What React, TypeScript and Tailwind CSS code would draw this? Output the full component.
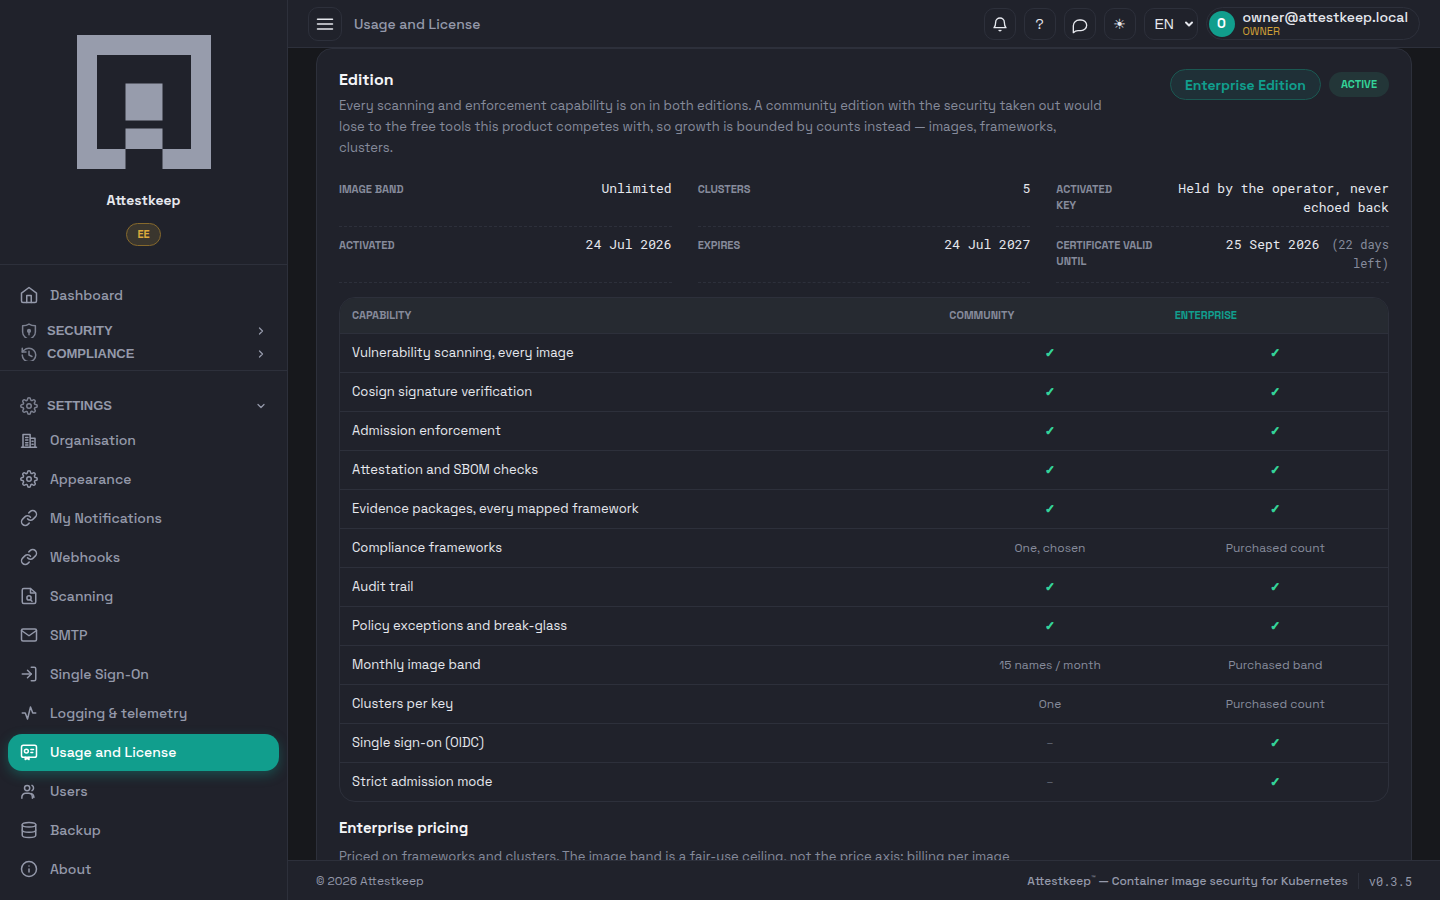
import type { ReactNode } from 'react';
import { clsx } from 'clsx';
import { ChevronDown, ChevronRight, History, Info, LogIn } from 'lucide-react';
import { FiLink, FiMail, FiSettings } from 'react-icons/fi';

interface IconProps {
  className?: string;
  children: ReactNode;
}

/**
 * Base for the icons drawn in this file
 */
function Icon({ className = 'w-[18px] h-[18px]', children }: IconProps) {
  return (
    <svg
      className={clsx('shrink-0', className)}
      viewBox="0 0 24 24"
      fill="none"
      stroke="currentColor"
      strokeWidth={2}
      strokeLinecap="round"
      strokeLinejoin="round"
      aria-hidden="true"
    >
      {children}
    </svg>
  );
}

const iconClass = 'w-[18px] h-[18px] shrink-0';

const homeIcon = (
  <Icon>
    <path d="M2 9.500 12 2l10 7.500V20a2 2 0 0 1-2 2H4a2 2 0 0 1-2-2z" />
    <path d="M9 22V12.500h6V22" />
  </Icon>
);

const shieldIcon = (
  <Icon>
    <path d="M12 1.500c2.500 1.600 5 2.200 8.500 2.200V12c0 5-3.500 8-8.500 10-5-2-8.500-5-8.500-10V3.700C7 3.700 9.500 3.100 12 1.500z" />
    <circle cx="12" cy="10.500" r="1.800" fill="currentColor" />
    <path d="M12 12v3.500" />
  </Icon>
);

const buildingIcon = (
  <Icon>
    <path d="M2 21.500h20M4 21.500V4.500h9.500v17M13.500 9.500h6.500v12" />
    <path d="M7.500 8.500h3M7.500 12h3M7.500 15.500h3M7.500 18.500h3M16 13.500h1.500M16 17.500h1.500" />
  </Icon>
);

const fileSearchIcon = (
  <Icon>
    <path d="M14 2H5a2 2 0 0 0-2 2v16a2 2 0 0 0 2 2h14a2 2 0 0 0 2-2V8z" />
    <path d="M14 2v6h6" />
    <circle cx="12" cy="14.500" r="2.800" />
    <path d="m14 17 2 2" />
  </Icon>
);

const licenseIcon = (
  <Icon>
    <rect x="2" y="3" width="20" height="16" rx="2.500" />
    <circle cx="8.500" cy="10.800" r="2.600" />
    <path d="M14.500 8.500h3.500M14.500 12.500h2.500M7 19v3l2.500-1.500L12 22v-3" />
  </Icon>
);

const usersIcon = (
  <Icon>
    <circle cx="9.500" cy="8" r="3.500" />
    <path d="M2.500 21.500V20a5 5 0 0 1 5-5h4a5 5 0 0 1 5 5v1.500" />
    <path d="M16 4.500a4 4 0 0 1 0 7M15.500 15.500c2 .8 3 2.500 3 5" />
  </Icon>
);

const pulseIcon = (
  <Icon>
    <path d="M3 12h4l3 8 4-16 3 8h4" />
  </Icon>
);

const databaseIcon = (
  <Icon>
    <ellipse cx="12" cy="5" rx="9" ry="3" />
    <path d="M3 5v14c0 1.700 4 3 9 3s9-1.300 9-3V5" />
    <path d="M3 12c0 1.700 4 3 9 3s9-1.300 9-3" />
  </Icon>
);

interface NavEntry {
  label: string;
  icon: ReactNode;
  active?: boolean;
}

const SETTINGS_ITEMS: NavEntry[] = [
  { label: 'Organisation', icon: buildingIcon },
  { label: 'Appearance', icon: <FiSettings className={iconClass} /> },
  { label: 'My Notifications', icon: <FiLink className={iconClass} /> },
  { label: 'Webhooks', icon: <FiLink className={iconClass} /> },
  { label: 'Scanning', icon: fileSearchIcon },
  { label: 'SMTP', icon: <FiMail className={iconClass} /> },
  { label: 'Single Sign-On', icon: <LogIn className={iconClass} /> },
  { label: 'Logging & telemetry', icon: pulseIcon },
  { label: 'Usage and License', icon: licenseIcon, active: true },
  { label: 'Users', icon: usersIcon },
  { label: 'Backup', icon: databaseIcon },
  { label: 'About', icon: <Info className={iconClass} /> },
];

const CAPABILITIES = [
  { name: 'Vulnerability scanning, every image', community: '✓', enterprise: '✓' },
  { name: 'Cosign signature verification', community: '✓', enterprise: '✓' },
  { name: 'Admission enforcement', community: '✓', enterprise: '✓' },
  { name: 'Attestation and SBOM checks', community: '✓', enterprise: '✓' },
  { name: 'Evidence packages, every mapped framework', community: '✓', enterprise: '✓' },
  { name: 'Compliance frameworks', community: 'One, chosen', enterprise: 'Purchased count' },
  { name: 'Audit trail', community: '✓', enterprise: '✓' },
  { name: 'Policy exceptions and break-glass', community: '✓', enterprise: '✓' },
  { name: 'Monthly image band', community: '15 names / month', enterprise: 'Purchased band' },
  { name: 'Clusters per key', community: 'One', enterprise: 'Purchased count' },
  { name: 'Single sign-on (OIDC)', community: '–', enterprise: '✓' },
  { name: 'Strict admission mode', community: '–', enterprise: '✓' },
];

/**
 * Sidebar link
 */
function NavItem({ label, icon, active }: NavEntry) {
  return (
    <a
      href="#"
      aria-current={active ? 'page' : undefined}
      className={clsx(
        'flex h-[37px] items-center gap-3 rounded-[14px] px-3 pb-0.5 text-sm font-medium',
        active ? 'bg-[#119e8d] text-white shadow-[0_4px_12px_rgba(17,158,141,0.35)]' : 'text-[#9499aa]'
      )}
    >
      {icon}
      {label}
    </a>
  );
}

interface NavGroupProps {
  label: string;
  icon: ReactNode;
  open?: boolean;
}

/**
 * Collapsible sidebar heading
 */
function NavGroup({ label, icon, open = false }: NavGroupProps) {
  const Chevron = open ? ChevronDown : ChevronRight;
  return (
    <button
      type="button"
      aria-expanded={open}
      className="flex h-[23px] w-full items-center gap-[9px] px-5 text-left font-['Liberation_Sans',sans-serif] text-[13px] font-bold uppercase text-[#9499aa]"
    >
      <span className={clsx('shrink-0 opacity-80', !open && 'h-[15px] overflow-hidden')}>{icon}</span>
      <span className="flex-1">{label}</span>
      <Chevron className="h-3 w-3" strokeWidth={2.5} />
    </button>
  );
}

function Sidebar() {
  return (
    <aside className="flex w-72 shrink-0 flex-col overflow-hidden border-r border-[#2d303b] bg-[#20222b]">
      {/* Brand */}
      <div className="flex flex-col items-center border-b border-[#2d303b] pt-[35px] pb-[18px]">
        <svg className="h-[134px] w-[134px] text-[#979cac]" viewBox="0 0 134 134" fill="currentColor" aria-hidden="true">
          <path d="M0 0h134v134H85.500v-20H114V20H20v94h28.500v20H0z" />
          <path d="M48.500 48.500h37v37h-37zM48.500 93.500h37V114h-37z" />
        </svg>
        <div className="mt-[21px] text-sm leading-5 font-bold text-[#e6e8ee]">Attestkeep</div>
        <span className="mt-[13px] flex h-[23px] items-center rounded-full border border-[#86692c] bg-[#3a362e] px-2.5 text-[11px] font-bold text-[#dcaa3c]">
          EE
        </span>
      </div>

      <nav>
        <div className="border-b border-[#2d303b] pt-3 pb-[5px]">
          <div className="mb-[5px] px-2">
            <NavItem label="Dashboard" icon={homeIcon} />
          </div>
          <NavGroup label="Security" icon={shieldIcon} />
          <NavGroup label="Compliance" icon={<History className={iconClass} />} />
        </div>

        <div className="pt-[23px]">
          <NavGroup label="Settings" icon={<FiSettings className={iconClass} />} open />
          <div className="mt-[5px] flex flex-col gap-[2px] px-2">
            {SETTINGS_ITEMS.map((item) => (
              <NavItem key={item.label} {...item} />
            ))}
          </div>
        </div>
      </nav>
    </aside>
  );
}

function HeaderButton({ label, children }: { label: string; children: ReactNode }) {
  return (
    <button
      type="button"
      aria-label={label}
      className="flex h-8 w-8 items-center justify-center rounded-[10px] border border-[#2d303b] text-sm text-[#e6e8ee]"
    >
      {children}
    </button>
  );
}

function Header() {
  return (
    <header className="flex h-12 shrink-0 items-center justify-between border-b border-[#2d303b] bg-[#20222b] px-5">
      <div className="flex items-center gap-3">
        <button
          type="button"
          aria-label="Toggle menu"
          className="flex h-[34px] w-[34px] items-center justify-center rounded-[10px] border border-[#2d303b] text-[#e6e8ee]"
        >
          <Icon className="h-[18px] w-[18px]">
            <path d="M2 5.500h20M2 12h20M2 18.500h20" />
          </Icon>
        </button>
        <span className="text-sm font-medium text-[#9499aa]">Usage and License</span>
      </div>

      <div className="flex items-center gap-2">
        <HeaderButton label="Notifications">
          <Icon className="h-4 w-4">
            <path d="M3 17.500h18c-2-2-2.500-4-2.500-8a6.500 6.500 0 0 0-13 0c0 4-.5 6-2.500 8z" />
            <path d="M10.500 21.500c1 .8 2 .8 3 0" />
          </Icon>
        </HeaderButton>
        <HeaderButton label="Help">?</HeaderButton>
        <HeaderButton label="Feedback">
          <Icon className="mt-1 h-4 w-4">
            <path d="M2 22V11.500a9 8.500 0 0 1 9-8.500h2.500a8.500 8 0 0 1 0 16H9c-2.500 0-5 1-7 3z" />
          </Icon>
        </HeaderButton>
        <HeaderButton label="Toggle theme">
          <span className="font-['DejaVu_Sans',sans-serif]">☀</span>
        </HeaderButton>
        <div className="relative">
          <select
            aria-label="Language"
            className="h-8 w-[54px] appearance-none rounded-[10px] border border-[#2d303b] bg-[#20222b] pl-2.5 font-['Liberation_Sans',sans-serif] text-sm text-[#e6e8ee]"
          >
            <option>EN</option>
          </select>
          <ChevronDown
            className="pointer-events-none absolute top-2.5 right-[3px] h-3 w-3 text-[#e6e8ee]"
            strokeWidth={4}
          />
        </div>
        <button
          type="button"
          className="flex h-[33px] items-center gap-2 rounded-full border border-[#2d303b] pr-[11px] pl-0.5 text-left"
        >
          <span className="flex h-[26px] w-[26px] items-center justify-center rounded-full bg-[#119e8d] text-[13px] font-bold text-white">
            O
          </span>
          <span className="flex flex-col pb-0.5">
            <span className="text-sm leading-4 font-medium text-[#e6e8ee]">owner@attestkeep.local</span>
            <span className="text-[11px] leading-3 text-[#d0a037]">OWNER</span>
          </span>
        </button>
      </div>
    </header>
  );
}

/**
 * Label and value pair in the license details
 */
function Detail({ label, children }: { label: string; children: ReactNode }) {
  return (
    <div className="flex items-start justify-between gap-3 border-b border-dashed border-[#2d303b] pt-2 pb-[9px]">
      <dt className="pt-[2px] text-[11px] leading-4 font-semibold uppercase text-[#868b9b]">{label}</dt>
      <dd className="text-right font-['Roboto_Mono','Liberation_Mono',monospace] text-[13px] leading-[19px] text-[#e6e8ee]">
        {children}
      </dd>
    </div>
  );
}

function CapabilityValue({ value }: { value: string }) {
  if (value === '✓') {
    return (
      <span className="font-['DejaVu_Sans',sans-serif] text-xs font-bold text-[#34d399] [-webkit-text-stroke:1px_currentColor]">
        ✓
      </span>
    );
  }
  return <span className={clsx('text-xs', value === '–' ? 'text-[#5d6270]' : 'text-[#868b9b]')}>{value}</span>;
}

function CapabilityTable() {
  return (
    <div className="mt-3.5 overflow-hidden rounded-2xl border border-[#2d303b]">
      <table className="w-full table-fixed border-separate border-spacing-0">
        <thead className="bg-[#262a31] text-left text-[11px] uppercase text-[#868b9b]">
          <tr>
            <th className="h-[35px] w-[57%] px-3 font-semibold">Capability</th>
            <th className="px-3 font-semibold">Community</th>
            <th className="px-3 font-semibold text-[#119e8d]">Enterprise</th>
          </tr>
        </thead>
        <tbody>
          {CAPABILITIES.map((row) => (
            <tr key={row.name}>
              <td className="h-[39px] border-t border-[#2d303b] px-3 text-[13px] leading-5 text-[#e6e8ee]">
                {row.name}
              </td>
              <td className="border-t border-[#2d303b] px-3 text-center text-xs leading-5">
                <CapabilityValue value={row.community} />
              </td>
              <td className="border-t border-[#2d303b] px-3 text-center text-xs leading-5">
                <CapabilityValue value={row.enterprise} />
              </td>
            </tr>
          ))}
        </tbody>
      </table>
    </div>
  );
}

function EditionCard() {
  return (
    <section className="rounded-2xl border border-[#2d303b] bg-[#20222b] px-[22px] pt-5 pb-6">
      <div className="flex items-start justify-between gap-6">
        <div>
          <h2 className="text-base leading-[22px] font-bold text-[#f4f5f8]">Edition</h2>
          <p className="mt-1 max-w-[768px] text-[13px] leading-[21px] text-[#868b9b]">
            Every scanning and enforcement capability is on in both editions. A community edition with the security
            taken out would lose to the free tools this product competes with, so growth is bounded by counts instead —
            images, frameworks, clusters.
          </p>
        </div>
        <div className="flex shrink-0 items-center gap-2">
          <span className="flex h-[31px] items-center rounded-full border border-[#1b5852] bg-[#1f3037] px-3.5 text-sm font-bold text-[#119e8d]">
            Enterprise Edition
          </span>
          <span className="flex h-[25px] items-center rounded-full bg-[#233638] px-3 text-[11px] font-bold text-[#34d399]">
            ACTIVE
          </span>
        </div>
      </div>

      {/* License details */}
      <dl className="mt-[13px] grid grid-cols-3 gap-x-[26px]">
        <Detail label="Image band">Unlimited</Detail>
        <Detail label="Clusters">5</Detail>
        <Detail label="Activated key">Held by the operator, never echoed back</Detail>
        <Detail label="Activated">24 Jul 2026</Detail>
        <Detail label="Expires">24 Jul 2027</Detail>
        <Detail label="Certificate valid until">
          25 Sept 2026 <span className="ml-1 text-xs text-[#868b9b]">(22 days left)</span>
        </Detail>
      </dl>

      <CapabilityTable />

      {/* Pricing */}
      <h3 className="mt-4 text-[15px] leading-5 font-bold text-[#f4f5f8]">Enterprise pricing</h3>
      <p className="mt-2 max-w-[720px] text-[13px] leading-[21px] text-[#868b9b]">
        Priced on frameworks and clusters. The image band is a fair-use ceiling, not the price axis: billing per image
      </p>
    </section>
  );
}

export default function App() {
  return (
    <div className="flex h-screen overflow-hidden bg-[#17181c] font-['Space_Grotesk',Inter,sans-serif]">
      <Sidebar />
      <div className="flex min-w-0 flex-1 flex-col">
        <Header />
        <main className="min-h-0 flex-1 overflow-hidden px-7">
          <EditionCard />
        </main>
        <footer className="flex h-10 shrink-0 items-center justify-between border-t border-[#2d303b] bg-[#20222b] px-7 text-xs text-[#9499aa]">
          <span>© 2026 Attestkeep</span>
          <div className="flex items-center">
            <span className="font-medium">
              Attestkeep<sup className="text-[8px]">™</sup> — Container image security for Kubernetes
            </span>
            <span className="ml-2.5 border-l border-[#2d303b] pl-2.5 font-['Roboto_Mono','Liberation_Mono',monospace]">
              v0.3.5
            </span>
          </div>
        </footer>
      </div>
    </div>
  );
}
